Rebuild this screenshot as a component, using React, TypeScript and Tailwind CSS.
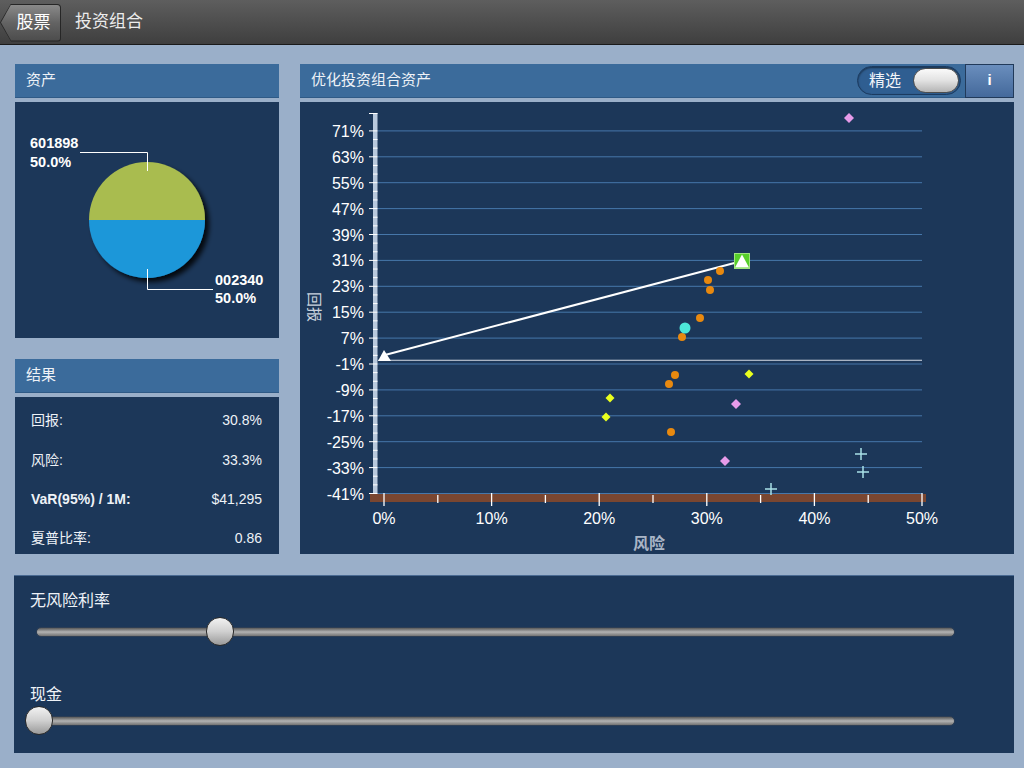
import React from 'react';

const FONT = '"Liberation Sans", "Noto Sans CJK SC", sans-serif';

const Y_TICKS = [71, 63, 55, 47, 39, 31, 23, 15, 7, -1, -9, -17, -25, -33, -41];
const X_TICKS = [0, 10, 20, 30, 40, 50];

const xPx = (p: number) => 84 + p * 10.76;
const yPx = (v: number) => 262 - (v + 1) * 3.2375;

const ORANGE = [
  [420, 169],
  [408, 178],
  [410, 188],
  [400, 216],
  [382, 235],
  [375, 273],
  [369, 282],
  [371, 330],
];
const YELLOW = [
  [449, 272],
  [310, 296],
  [306, 315],
];
const PINK = [
  [549, 16],
  [436, 302],
  [425, 359],
];
const CROSSES = [
  [561, 352],
  [563, 370],
  [471, 387],
];

function PanelHeader({ title, children }: { title: string; children?: React.ReactNode }) {
  return (
    <div className="h-[34px] bg-[#3b6b9b] flex items-center justify-between border-b border-[#2f5a86]">
      <span className="pl-[11px] text-[15px] text-[#eef2f7]">{title}</span>
      {children}
    </div>
  );
}

function Pie() {
  const cx = 132;
  const cy = 118;
  const r = 58;
  return (
    <svg width="264" height="236" viewBox="0 0 264 236">
      <defs>
        <filter id="pieShadow" x="-20%" y="-20%" width="150%" height="150%">
          <feDropShadow dx="4" dy="4" stdDeviation="2.5" floodColor="#000" floodOpacity="0.85" />
        </filter>
      </defs>
      <g filter="url(#pieShadow)">
        <path d={`M ${cx - r} ${cy} A ${r} ${r} 0 0 1 ${cx + r} ${cy} Z`} fill="#a9bc50" />
        <path d={`M ${cx + r} ${cy} A ${r} ${r} 0 0 1 ${cx - r} ${cy} Z`} fill="#1f97d9" />
      </g>
      <polyline points="65,50.5 132.5,50.5 132.5,69" fill="none" stroke="#fff" strokeWidth="1" />
      <polyline points="132.5,167 132.5,187.5 198,187.5" fill="none" stroke="#fff" strokeWidth="1" />
      <g fill="#fff" fontSize="14.5" fontWeight="bold">
        <text x="15" y="46">601898</text>
        <text x="15" y="65">50.0%</text>
        <text x="200" y="183">002340</text>
        <text x="200" y="201">50.0%</text>
      </g>
    </svg>
  );
}

function Chart() {
  const minor: number[] = [];
  for (let i = 0; i < Y_TICKS.length - 1; i++) {
    const a = yPx(Y_TICKS[i]);
    const b = yPx(Y_TICKS[i + 1]);
    minor.push(a + (b - a) / 3, a + (2 * (b - a)) / 3);
  }
  return (
    <svg width="714" height="452" viewBox="0 0 714 452">
      {/* grid */}
      {Y_TICKS.map((v) => (
        <line key={v} x1="78" x2="622" y1={yPx(v)} y2={yPx(v)} stroke="#4677aa" strokeWidth="1" />
      ))}
      <line x1="78" x2="622" y1={yPx(0) - 0.5} y2={yPx(0) - 0.5} stroke="#d6dde6" strokeWidth="1" />

      {/* y axis */}
      <rect x="73" y="11" width="4.5" height="381" fill="#b9c9dd" />
      <line x1="69" x2="77.5" y1="11.5" y2="11.5" stroke="#fff" strokeWidth="1" />
      {Y_TICKS.map((v) => (
        <line key={v} x1="69" x2="77.5" y1={yPx(v)} y2={yPx(v)} stroke="#fff" strokeWidth="1" />
      ))}
      {minor.map((y, i) => (
        <line key={i} x1="73" x2="77.5" y1={y} y2={y} stroke="#fff" strokeWidth="1" />
      ))}
      {Y_TICKS.map((v) => (
        <text key={v} x="64" y={yPx(v) + 6} textAnchor="end" fill="#fff" fontSize="16">
          {v}%
        </text>
      ))}

      {/* x axis */}
      <rect x="70" y="392" width="556" height="8" fill="#7a4630" />
      {[0, 5, 10, 15, 20, 25, 30, 35, 40, 45, 50].map((p) => (
        <line
          key={p}
          x1={xPx(p)}
          x2={xPx(p)}
          y1={p % 10 === 0 ? 391 : 393}
          y2={p % 10 === 0 ? 404 : 401}
          stroke="#fff"
          strokeWidth="1.3"
        />
      ))}
      {X_TICKS.map((p) => (
        <text key={p} x={xPx(p)} y="422" textAnchor="middle" fill="#fff" fontSize="16">
          {p}%
        </text>
      ))}

      <text x="349" y="447" textAnchor="middle" fill="#a9b5c6" fontSize="16" fontWeight="bold">
        风险
      </text>
      <text x="9" y="205" fill="#c9d2de" fontSize="15" textAnchor="middle" transform="rotate(90 9 205)">
        回报
      </text>

      {/* capital market line */}
      <line x1="85" y1="253" x2="442" y2="159" stroke="#fff" strokeWidth="2" />
      <polygon points="84,248 78,259 91,259" fill="#fff" />

      {ORANGE.map(([x, y], i) => (
        <circle key={i} cx={x} cy={y} r="4" fill="#e8890f" />
      ))}
      <circle cx="385" cy="226" r="5.5" fill="#4de8d9" />
      {YELLOW.map(([x, y], i) => (
        <polygon key={i} points={`${x},${y - 4.5} ${x + 4.5},${y} ${x},${y + 4.5} ${x - 4.5},${y}`} fill="#e9ff1e" />
      ))}
      {PINK.map(([x, y], i) => (
        <polygon key={i} points={`${x},${y - 5} ${x + 5},${y} ${x},${y + 5} ${x - 5},${y}`} fill="#e69be9" />
      ))}
      {CROSSES.map(([x, y], i) => (
        <g key={i} stroke="#a9e2e8" strokeWidth="1.5">
          <line x1={x - 6} x2={x + 6} y1={y} y2={y} />
          <line x1={x} x2={x} y1={y - 6} y2={y + 6} />
        </g>
      ))}

      <rect x="434.5" y="151.5" width="15" height="15" fill="#57cf2a" stroke="#9fe57c" strokeWidth="1" />
      <polygon points="442,152.5 449,165.5 435,165.5" fill="#fff" />
    </svg>
  );
}

function Slider({ label, offset, labelGap }: { label: string; offset: number; labelGap: string }) {
  return (
    <div className={labelGap}>
      <div className="h-[20px] leading-[20px] pl-[16px] text-[16px] text-[#eef2f7]">{label}</div>
      <div className={offset > 0 ? 'mt-[6px] relative h-[30px] ml-[11px]' : 'mt-[1px] relative h-[30px] ml-[11px]'}>
        <div className="absolute left-[11px] top-[10px] w-[919px] h-[10px] rounded-full border border-[#2d3e55] bg-gradient-to-b from-[#5b5b5b] via-[#b3b3b3] to-[#737373]" />
        <div
          className={`absolute top-0 w-[28px] h-[29px] rounded-full border border-[#2a2a2a] bg-gradient-to-b from-[#f2f2f2] via-[#d0d0d0] to-[#9a9a9a] ${
            offset > 0 ? 'left-[181px]' : 'left-0'
          }`}
        />
      </div>
    </div>
  );
}

export default function App() {
  return (
    <div className="w-[1024px] h-[768px] bg-[#9aafc9] overflow-hidden" style={{ fontFamily: FONT }}>
      {/* top bar */}
      <div className="h-[45px] bg-gradient-to-b from-[#5e5e5e] to-[#3f3f3f] border-b border-[#1a1a1a] flex items-center">
        <div className="ml-0 mt-[1px] h-[38px] w-[61px] bg-[#262626] [clip-path:polygon(11px_0,100%_0,100%_100%,11px_100%,0_50%)] rounded-r-[4px]">
          <div className="h-[36px] w-[59px] mt-[1px] ml-[1px] bg-gradient-to-b from-[#8a8a8a] via-[#636363] to-[#4c4c4c] [clip-path:polygon(10px_0,100%_0,100%_100%,10px_100%,0_50%)] rounded-r-[3px] flex items-center justify-center pl-[6px] text-[17px] text-white">
            股票
          </div>
        </div>
        <div className="ml-[14px] text-[17px] text-[#ececec]">投资组合</div>
      </div>

      {/* main */}
      <div className="flex gap-[21px] pl-[15px] pt-[19px]">
        <div className="w-[264px] flex flex-col">
          <PanelHeader title="资产" />
          <div className="mt-[4px] h-[236px] bg-[#1c3759]">
            <Pie />
          </div>
          <div className="mt-[21px]">
            <PanelHeader title="结果" />
          </div>
          <div className="mt-[4px] h-[157px] bg-[#1c3759] overflow-hidden pt-[3px] text-[14px] text-[#eef2f7]">
            <div className="h-10 flex items-center justify-between pl-[16px] pr-[17px]">
              <span>回报:</span>
              <span>30.8%</span>
            </div>
            <div className="h-10 flex items-center justify-between pl-[16px] pr-[17px]">
              <span>风险:</span>
              <span>33.3%</span>
            </div>
            <div className="h-[38px] flex items-center justify-between pl-[16px] pr-[17px]">
              <span className="font-bold">VaR(95%) / 1M:</span>
              <span>$41,295</span>
            </div>
            <div className="h-10 flex items-center justify-between pl-[16px] pr-[17px]">
              <span>夏普比率:</span>
              <span>0.86</span>
            </div>
          </div>
        </div>

        <div className="w-[714px] flex flex-col">
          <PanelHeader title="优化投资组合资产">
            <div className="flex items-center h-full">
              <div className="h-[29px] w-[104px] rounded-full border-[1.5px] border-[#1b3a5f] bg-[#2f5e91] shadow-[inset_0_1px_2px_rgba(0,0,0,0.5)] flex items-center justify-between pl-[11px] pr-[1px]">
                <span className="text-[16px] text-[#f2f5f9]">精选</span>
                <div className="w-[46px] h-[25px] rounded-full border border-[#4d4d4d] bg-gradient-to-b from-[#fafafa] via-[#e2e2e2] to-[#b5b5b5]" />
              </div>
              <div className="ml-[4px] h-[34px] w-[49px] bg-gradient-to-b from-[#6a8ebd] to-[#44699b] border border-[#213a5a] flex items-center justify-center text-[15px] font-bold text-white">
                i
              </div>
            </div>
          </PanelHeader>
          <div className="mt-[4px] h-[452px] bg-[#1c3759]">
            <Chart />
          </div>
        </div>
      </div>

      {/* sliders */}
      <div className="ml-[14px] mt-[21px] w-[1000px] h-[178px] bg-[#1c3759] border-t border-[#4a6a92] pt-[15px]">
        <Slider label="无风险利率" offset={181} labelGap="" />
        <Slider label="现金" offset={0} labelGap="mt-[38px]" />
      </div>
    </div>
  );
}
